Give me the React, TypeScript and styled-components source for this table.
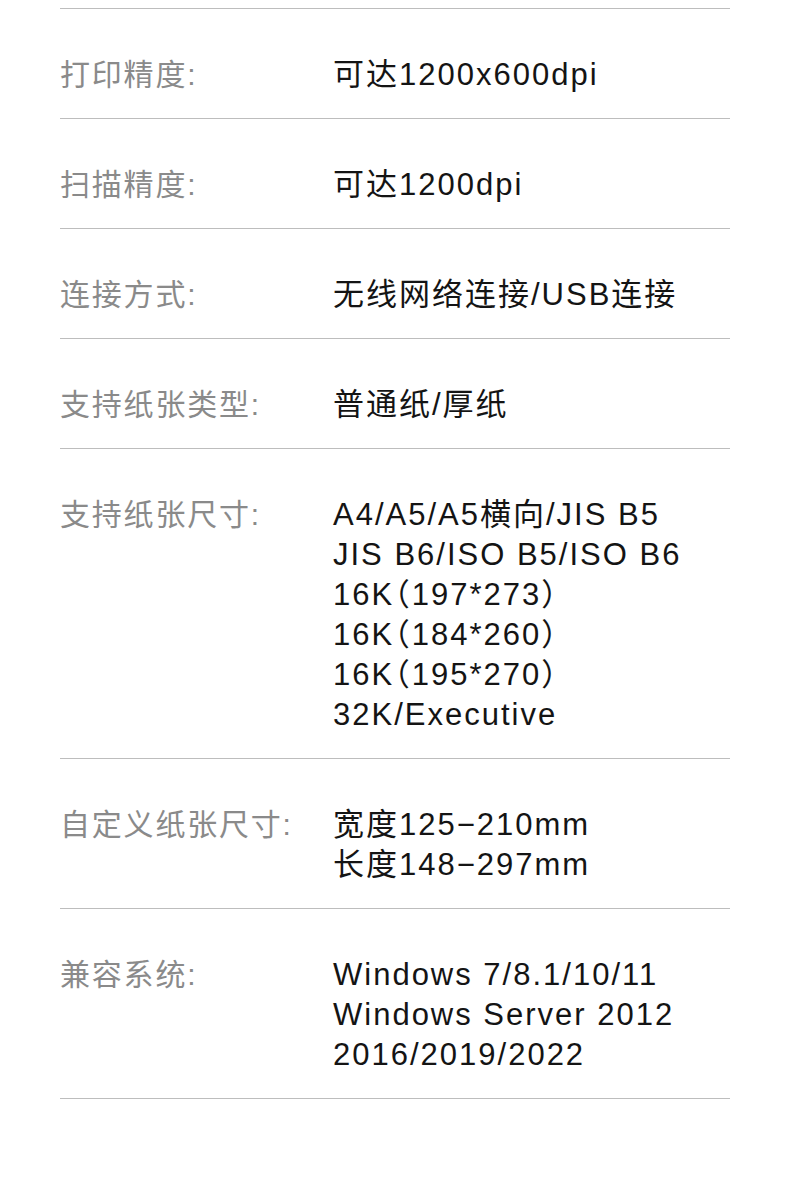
import React from "react";
import styled, { createGlobalStyle } from "styled-components";

const Global = createGlobalStyle`
  html, body { margin: 0; padding: 0; background: #ffffff; }
  body { font-family: "Liberation Sans", Arial, "Noto Sans CJK SC", sans-serif; }
`;

const Page = styled.div`
  width: 790px;
  min-height: 1199px;
  box-sizing: border-box;
  padding: 8px 60px 0 60px;
  background: #ffffff;
`;

const Table = styled.div`
  display: flex;
  flex-direction: column;
  border-top: 1px solid #bdbdbd;
`;

const Row = styled.div`
  display: grid;
  grid-template-columns: 273px 1fr;
  padding: 46px 0 23px 0;
  border-bottom: 1px solid #bdbdbd;
  font-size: 30px;
  line-height: 40px;
  font-feature-settings: "halt" 1;
`;

const Label = styled.div`
  color: #8a8a8a;
  white-space: nowrap;
  letter-spacing: 1.8px;
`;

const Value = styled.div`
  color: #141414;
  display: flex;
  flex-direction: column;
  white-space: nowrap;
  font-size: 31px;
  letter-spacing: 2px;
`;

const specs: { label: string; lines: string[] }[] = [
  { label: "打印精度:", lines: ["可达1200x600dpi"] },
  { label: "扫描精度:", lines: ["可达1200dpi"] },
  { label: "连接方式:", lines: ["无线网络连接/USB连接"] },
  { label: "支持纸张类型:", lines: ["普通纸/厚纸"] },
  {
    label: "支持纸张尺寸:",
    lines: [
      "A4/A5/A5横向/JIS B5",
      "JIS B6/ISO B5/ISO B6",
      "16K（197*273）",
      "16K（184*260）",
      "16K（195*270）",
      "32K/Executive",
    ],
  },
  { label: "自定义纸张尺寸:", lines: ["宽度125−210mm", "长度148−297mm"] },
  {
    label: "兼容系统:",
    lines: ["Windows 7/8.1/10/11", "Windows Server 2012", "2016/2019/2022"],
  },
];

export default function App() {
  return (
    <>
      <Global />
      <Page>
        <Table>
          {specs.map((s) => (
            <Row key={s.label}>
              <Label>{s.label}</Label>
              <Value>
                {s.lines.map((l) => (
                  <span key={l}>{l}</span>
                ))}
              </Value>
            </Row>
          ))}
        </Table>
      </Page>
    </>
  );
}
